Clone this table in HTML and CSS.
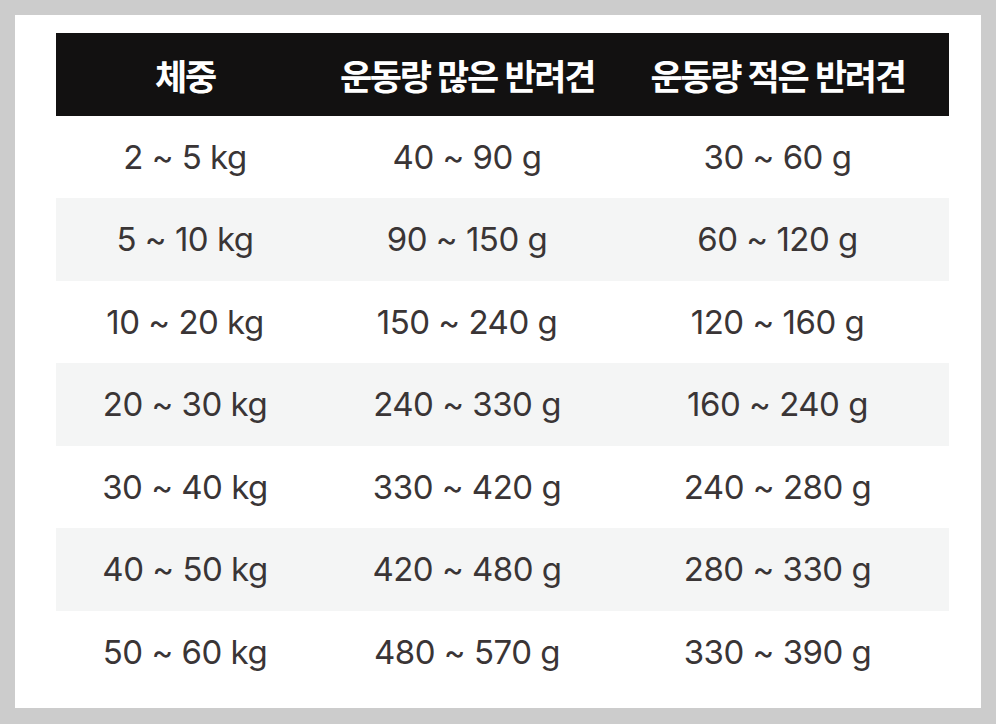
FILE: index.html
```html
<!DOCTYPE html>
<html lang="ko">
<head>
<meta charset="utf-8">
<link rel="stylesheet" href="styles.css">
</head>
<body>
<div class="frame">
  <div class="table">
    <div class="row head">
      <div class="cell c1">체중</div>
      <div class="cell c2">운동량 많은 반려견</div>
      <div class="cell c3">운동량 적은 반려견</div>
    </div>
    <div class="row">
      <div class="cell c1">2 ~ 5 kg</div>
      <div class="cell c2">40 ~ 90 g</div>
      <div class="cell c3">30 ~ 60 g</div>
    </div>
    <div class="row alt">
      <div class="cell c1">5 ~ 10 kg</div>
      <div class="cell c2">90 ~ 150 g</div>
      <div class="cell c3">60 ~ 120 g</div>
    </div>
    <div class="row">
      <div class="cell c1">10 ~ 20 kg</div>
      <div class="cell c2">150 ~ 240 g</div>
      <div class="cell c3">120 ~ 160 g</div>
    </div>
    <div class="row alt">
      <div class="cell c1">20 ~ 30 kg</div>
      <div class="cell c2">240 ~ 330 g</div>
      <div class="cell c3">160 ~ 240 g</div>
    </div>
    <div class="row">
      <div class="cell c1">30 ~ 40 kg</div>
      <div class="cell c2">330 ~ 420 g</div>
      <div class="cell c3">240 ~ 280 g</div>
    </div>
    <div class="row alt">
      <div class="cell c1">40 ~ 50 kg</div>
      <div class="cell c2">420 ~ 480 g</div>
      <div class="cell c3">280 ~ 330 g</div>
    </div>
    <div class="row">
      <div class="cell c1">50 ~ 60 kg</div>
      <div class="cell c2">480 ~ 570 g</div>
      <div class="cell c3">330 ~ 390 g</div>
    </div>
  </div>
</div>
</body>
</html>
```
FILE: styles.css
```css
html, body {
  margin: 0;
  padding: 0;
}
body {
  background: #cccccc;
  width: 996px;
  height: 724px;
  overflow: hidden;
}
.frame {
  box-sizing: border-box;
  margin: 15px 0 0 15px;
  width: 966px;
  height: 693px;
  background: #ffffff;
  padding: 18px 0 0 41px;
}
.table {
  width: 893px;
}
.row {
  display: grid;
  grid-template-columns: 258px 306px 1fr;
  height: 82.5px;
  align-items: center;
  font-family: Inter, "Noto Sans CJK KR", sans-serif;
  font-size: 33px;
  letter-spacing: -0.5px;
  color: #3a3536;
}
.row.alt {
  background: #f4f5f5;
}
.row.head {
  background: #121111;
  color: #ffffff;
  font-family: "Noto Sans CJK KR", sans-serif;
  font-weight: 700;
  font-size: 35px;
  letter-spacing: -2.3px;
}
.cell {
  text-align: center;
  white-space: nowrap;
}
.c3 {
  padding-right: 14px;
}
```
